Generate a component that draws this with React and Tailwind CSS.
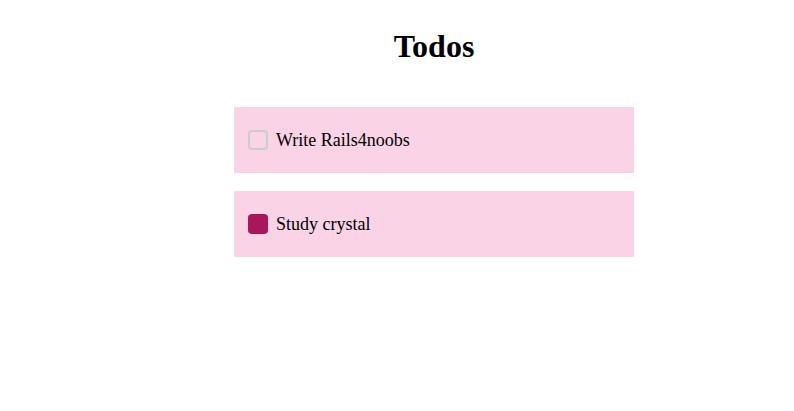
import { useState } from 'react';

const INITIAL = [
  { id: 1, title: 'Write Rails4noobs', done: false },
  { id: 2, title: 'Study crystal', done: true },
];

export default function App() {
  const [todos, setTodos] = useState(INITIAL);

  const toggle = id =>
    setTodos(ts => ts.map(t => (t.id === id ? { ...t, done: !t.done } : t)));

  return (
    <div className="min-h-[411px] bg-white font-['Liberation_Serif',serif] text-black">
      <div className="ml-[234px] w-[400px] pt-[21px]">
        <h1 className="text-center text-[32px] font-bold leading-[50px]">Todos</h1>

        <ul className="mt-[36px] flex flex-col gap-[18px]">
          {todos.map(t => (
            <li key={t.id} className="flex h-[66px] items-center gap-2 bg-[#fad4e6] px-[14px]">
              <button
                type="button"
                onClick={() => toggle(t.id)}
                className={`h-[20px] w-[20px] shrink-0 rounded-[4px] ${
                  t.done ? 'bg-[#a8175a]' : 'border-2 border-[#cccccc]'
                }`}
              />
              <span className="text-[18px] leading-none">{t.title}</span>
            </li>
          ))}
        </ul>
      </div>
    </div>
  );
}
